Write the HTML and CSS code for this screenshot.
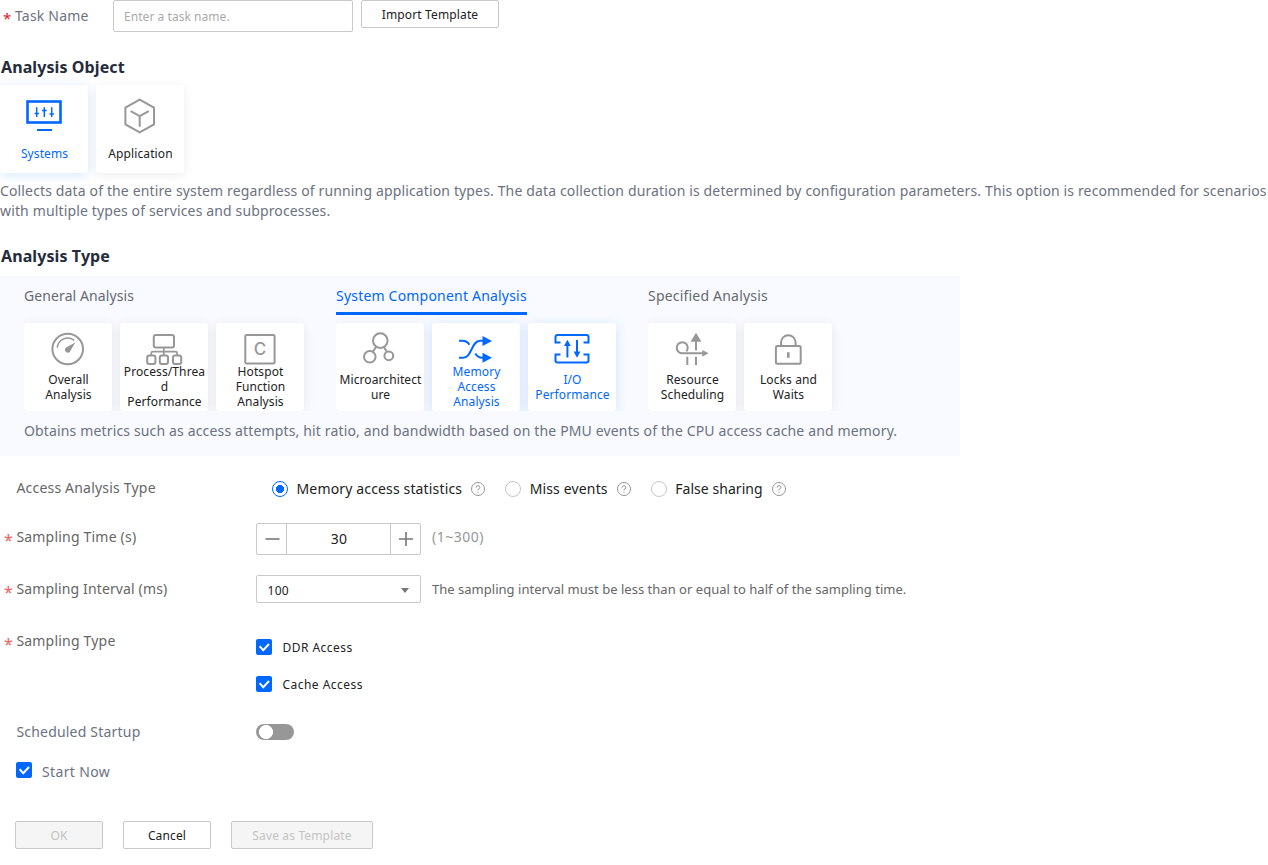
FILE: index.html
```html
<!DOCTYPE html>
<html lang="en">
<head>
<meta charset="utf-8">
<title>Create Analysis Task</title>
<link rel="stylesheet" href="styles.css">
</head>
<body>
<main class="page">
  <div class="name-row">
    <label class="label required name-label"><span>Task Name</span></label>
    <input class="name-input" type="text" placeholder="Enter a task name.">
    <button class="btn import-btn">Import Template</button>
  </div>

  <h3 class="heading object-heading">Analysis Object</h3>
  <div class="cards object-cards">
    <div class="card card-tall active">
      <svg class="icon" viewBox="0 0 40 40"><rect x="3.5" y="5.5" width="33" height="21" stroke-width="2.6"/><path d="M13 34h15"/><path d="M12.7 11.2v9.8M20.3 11.2v9.8M27.7 11.2v9.8M10.5 17.5h4.4M18 14.5h4.6M25.5 18h4.4" stroke-width="1.5"/></svg>
      <span class="card-text">Systems</span>
    </div>
    <div class="card card-tall">
      <svg class="icon" viewBox="0 0 40 40"><path d="M19.7 3.7 34 11.6v16.8l-14.3 8-14.3-8V11.6zM10.7 15.2l9 4.9 9-4.9M19.7 20v10.7"/></svg>
      <span class="card-text">Application</span>
    </div>
  </div>
  <p class="description">Collects data of the entire system regardless of running application types. The data collection duration is determined by configuration parameters. This option is recommended for scenarios with multiple types of services and subprocesses.</p>

  <h3 class="heading type-heading">Analysis Type</h3>
  <section class="panel">
    <div class="groups">
      <div class="group">
        <div class="tab tab-general">General Analysis</div>
        <div class="cards group-cards">
          <div class="card">
            <svg class="icon" viewBox="0 0 40 40"><circle cx="19.7" cy="20" r="15.3"/><path d="M9.3 18.7c.5-8 9.5-12.5 17-7.4" stroke-width="1.5"/><path class="solid" d="M27.3 13.4 22.6 21.6a2.9 2.9 0 1 1-4.2-3.4z"/></svg>
            <span class="card-text">Overall<br>Analysis</span>
          </div>
          <div class="card">
            <svg class="icon" viewBox="0 0 40 40"><rect x="9.8" y="6" width="20.2" height="12.6" rx="2"/><rect x="3.2" y="26.4" width="8.2" height="8.6" rx="2"/><rect x="15.8" y="26.4" width="8.2" height="8.6" rx="2"/><rect x="29" y="26.4" width="8.2" height="8.6" rx="2"/><path d="M19.8 18.6v7.8M7.3 26.4v-2.2q0-1.5 1.5-1.5h22.8q1.5 0 1.5 1.5v2.2" stroke-width="1.7"/></svg>
            <span class="card-text">Process/Threa<br>d<br>Performance</span>
          </div>
          <div class="card">
            <svg class="icon" viewBox="0 0 40 40"><rect x="5.3" y="6" width="29.3" height="28.4" rx="1.5"/><text class="icon-letter" x="20" y="26">C</text></svg>
            <span class="card-text">Hotspot<br>Function<br>Analysis</span>
          </div>
        </div>
      </div>
      <div class="group">
        <div class="tab tab-active">System Component Analysis</div>
        <div class="cards group-cards">
          <div class="card">
            <svg class="icon" viewBox="0 0 40 40"><circle cx="20.3" cy="11.6" r="7.3"/><circle cx="9.8" cy="27.8" r="5.8"/><circle cx="28.8" cy="26.8" r="4.4"/><path d="m16.3 17.8-3.5 5M24 18l2.7 4.8"/></svg>
            <span class="card-text">Microarchitect<br>ure</span>
          </div>
          <div class="card active">
            <svg class="icon" viewBox="0 0 40 40"><path d="M3 28.8h4c9 0 8.2-17 17-17h3M3 11.8h3q5 0 7.5 4M19.3 24.5q2.6 4.2 6.7 4.2h1"/><path class="solid" d="m26.5 6.900 9.500 5-9.500 5zM26.500 23.700l9.500 5-9.500 5z"/></svg>
            <span class="card-text">Memory<br>Access<br>Analysis</span>
          </div>
          <div class="card active">
            <svg class="icon" viewBox="0 0 40 40"><path d="M8.500 13.500H3.500V8q0-2 2-2h29q2 0 2 2v5.500h-5M8.500 25.400H3.500v6.200q0 2 2 2h29q2 0 2-2v-6.200h-5"/><path d="M15.400 28.500V15M25 11v13"/><path class="solid" d="m15.400 10.800 3.400 6.200H12zM25 28.700l3.400-6.200h-6.800z"/></svg>
            <span class="card-text">I/O<br>Performance</span>
          </div>
        </div>
      </div>
      <div class="group">
        <div class="tab">Specified Analysis</div>
        <div class="cards group-cards">
          <div class="card">
            <svg class="icon" viewBox="0 0 40 40"><path d="M14.500 22.300a5.500 5.500 0 1 0-4.800 2H31M24 12v9.500M15.300 27.700V36M24 27.700V36"/><path class="solid" d="m24 3.700 5.400 9H18.600zM30.300 20.900l6.200 3.400-6.200 3.400z"/></svg>
            <span class="card-text">Resource<br>Scheduling</span>
          </div>
          <div class="card">
            <svg class="icon" viewBox="0 0 40 40"><rect x="7.900" y="17" width="24.800" height="17.800" rx="1.500"/><path d="M13 17v-3.500a7.300 7.300 0 0 1 14.600 0V17"/><path d="M20.300 23.200v5.600" stroke-width="2.600"/></svg>
            <span class="card-text">Locks and<br>Waits</span>
          </div>
        </div>
      </div>
    </div>
    <p class="panel-note">Obtains metrics such as access attempts, hit ratio, and bandwidth based on the PMU events of the CPU access cache and memory.</p>
  </section>

  <form class="form">
    <div class="row row-access">
      <span class="label">Access Analysis Type</span>
      <div class="radios">
        <span class="radio checked"></span><span class="radio-text">Memory access statistics</span>
        <svg class="help" viewBox="0 0 14 14"><circle cx="7" cy="7" r="6.500"/><path d="M5.100 5.600q0-2 1.900-2t1.900 1.800q0 1.200-1.900 2v1M7 9.700v1.100"/></svg>
        <span class="radio"></span><span class="radio-text">Miss events</span>
        <svg class="help" viewBox="0 0 14 14"><circle cx="7" cy="7" r="6.500"/><path d="M5.100 5.600q0-2 1.900-2t1.900 1.800q0 1.200-1.900 2v1M7 9.700v1.100"/></svg>
        <span class="radio"></span><span class="radio-text last">False sharing</span>
        <svg class="help" viewBox="0 0 14 14"><circle cx="7" cy="7" r="6.500"/><path d="M5.100 5.600q0-2 1.900-2t1.900 1.800q0 1.200-1.900 2v1M7 9.700v1.100"/></svg>
      </div>
    </div>
    <div class="row row-time">
      <span class="label required">Sampling Time (s)</span>
      <div class="stepper">
        <svg class="step" viewBox="0 0 29 30"><path d="M8.500 15h14"/></svg>
        <span class="step-value">30</span>
        <svg class="step" viewBox="0 0 29 30"><path d="M8 15h14M15 8v14"/></svg>
      </div>
      <span class="range">(1~300)</span>
    </div>
    <div class="row row-interval">
      <span class="label required">Sampling Interval (ms)</span>
      <div class="select"><span>100</span><i class="caret"></i></div>
      <span class="hint">The sampling interval must be less than or equal to half of the sampling time.</span>
    </div>
    <div class="row row-type">
      <span class="label required">Sampling Type</span>
      <div class="checks">
        <div class="check-line"><svg class="check" viewBox="0 0 16 16"><path d="m3.600 7.200 3.600 4 5.800-6.200"/></svg><span class="check-text">DDR Access</span></div>
        <div class="check-line"><svg class="check" viewBox="0 0 16 16"><path d="m3.600 7.200 3.600 4 5.800-6.200"/></svg><span class="check-text">Cache Access</span></div>
      </div>
    </div>
    <div class="row row-schedule">
      <span class="label">Scheduled Startup</span>
      <span class="toggle"></span>
    </div>
    <div class="start-line"><svg class="check" viewBox="0 0 16 16"><path d="m3.600 7.200 3.600 4 5.800-6.200"/></svg><span class="start-text">Start Now</span></div>
    <div class="actions">
      <button class="btn btn-ok disabled" type="button">OK</button>
      <button class="btn btn-cancel" type="button">Cancel</button>
      <button class="btn btn-save disabled" type="button">Save as Template</button>
    </div>
  </form>
</main>
</body>
</html>
```
FILE: styles.css
```css
* { box-sizing: border-box; }
body { margin: 0; background: #fff; color: #6c7280; font: 14px/20px "Noto Sans", "Open Sans", sans-serif; letter-spacing: .14px; }
.page { width: 1268px; height: 865px; overflow: hidden; }
.name-row { display: flex; height: 32px; align-items: flex-start; }
.label { white-space: nowrap; letter-spacing: .2px; }
.required::before { content: "*"; display: inline-block; width: 12.4px; height: 20px; color: #f45c5e; font-size: 16px; line-height: 20px; vertical-align: -4px; }
.name-label { width: 113px; padding: 6px 0 0 3px; }
.name-label::before { width: 12px; color: #e02128; font-size: 15px; vertical-align: -3px; }
.name-input { width: 240px; height: 32px; margin: 0 8px 0 0; padding: 0 10px; border: 1px solid #c8c8c8; border-radius: 2px; background: #fff; font: 12px "Noto Sans", sans-serif; letter-spacing: .05px; }
.name-input::placeholder { color: #aaa; opacity: 1; }
.btn { height: 28px; padding: 1px 0 0; border: 1px solid #c8c8c8; border-radius: 2px; background: #fff; color: #222; font: 12px/25px "Noto Sans", sans-serif; letter-spacing: .14px; white-space: nowrap; }
.disabled { background: #f5f5f5; color: #c4c4c4; }
.import-btn { width: 138px; }
.heading { margin: 0; height: 24px; color: #252b3a; font-size: 16px; line-height: 24px; font-weight: 700; letter-spacing: .1px; }
.object-heading { margin: 23px 0 6px 1px; }
.cards { display: flex; gap: 8px; }
.card { display: flex; flex-direction: column; align-items: center; width: 88px; height: 88px; padding-top: 6px; border-radius: 3px; background: #fff; color: #222; box-shadow: 0 2px 12px rgba(0, 0, 0, .08); font-size: 12px; line-height: 15px; text-align: center; white-space: nowrap; letter-spacing: .1px; }
.card.active { color: #0067ff; box-shadow: 0 2px 12px rgba(0, 103, 255, .16); }
.icon { display: block; flex: none; width: 40px; height: 40px; fill: none; stroke: #979797; stroke-width: 2; }
.active .icon { stroke: #0067ff; }
.icon .solid { fill: #979797; stroke: none; }
.active .icon .solid { fill: #0067ff; }
.icon-letter { fill: #979797; stroke: none; font: 500 17px Inter, sans-serif; text-anchor: middle; }
.card-text { display: flex; flex-direction: column; justify-content: center; height: 45px; margin-top: -5px; padding-left: 1px; }
.card-tall { padding-top: 11px; }
.card-tall .card-text { margin-top: -3px; }
.description { margin: 8px 0 0; height: 40px; }
.type-heading { margin: 23px 0 8px 1px; }
.panel { width: 960px; height: 180px; padding-left: 24px; background: #f8faff; }
.groups { display: flex; }
.group { width: 312px; }
.tab { display: inline-block; height: 39px; padding-top: 10px; white-space: nowrap; letter-spacing: .2px; color: #666a70; }
.tab-general { letter-spacing: .1px; }
.tab-active { color: #0067ff; border-bottom: 3px solid #0067ff; }
.group-cards { height: 96px; padding-top: 8px; overflow: hidden; }
.panel-note { margin: 10px 0 0; white-space: nowrap; letter-spacing: .15px; }
.form { margin: 0; }
.row { display: flex; align-items: flex-start; }
.row > .label { width: 256px; padding-left: 16.4px; color: #666; }
.row > .required { padding-left: 4px; }
.row-access { height: 67px; padding-top: 22px; }
.radios { display: flex; align-items: center; height: 22px; padding-left: 16px; color: #222; white-space: nowrap; }
.radio { width: 16px; height: 16px; border: 1px solid #c8c8c8; border-radius: 50%; background: #fff; margin-right: 8.500px; }
.radio.checked { border-color: #0067ff; background: radial-gradient(circle, #0067ff 3.800px, #fff 4.300px); }
.radio-text { letter-spacing: .15px; }
.radio-text.last { letter-spacing: .05px; }
.help { width: 14px; height: 14px; margin-left: 9px; margin-right: 20px; fill: none; stroke: #979797; }
.row-time { height: 52px; }
.row-time > .label, .row-time > .range { margin-top: 4px; }
.stepper { display: flex; width: 165px; height: 32px; border: 1px solid #c8c8c8; border-radius: 2px; color: #222; }
.step { width: 29px; height: 30px; fill: none; stroke: #777; stroke-width: 1.600; }
.step-value { flex: 1; padding-left: 1px; border: solid #c8c8c8; border-width: 0 1px; text-align: center; line-height: 30px; }
.range { margin-left: 11px; color: #979797; letter-spacing: .5px; }
.row-interval { height: 52px; }
.row-interval > .label { margin-top: 4px; letter-spacing: .14px; }
.select { display: flex; align-items: center; justify-content: space-between; width: 165px; height: 28px; padding: 3px 11px 0 10.500px; border: 1px solid #c8c8c8; border-radius: 2px; color: #222; font-size: 12px; letter-spacing: .3px; }
.caret { border: solid transparent; border-width: 5px 4.500px 0; border-top-color: #777; }
.hint { margin: 4px 0 0 11px; font-size: 13px; letter-spacing: .02px; white-space: nowrap; color: #666; }
.row-type { height: 95px; }
.row-type > .label { margin-top: 4px; }
.checks { display: grid; gap: 21px; padding-top: 12px; color: #222; }
.check-line { display: flex; align-items: center; height: 16px; font-size: 12px; }
.check { display: block; width: 16px; height: 16px; border-radius: 2px; background: #0067ff; fill: none; stroke: #fff; stroke-width: 2; }
.check-text { margin: 2px 0 0 10.500px; letter-spacing: .47px; }
.row-schedule { height: 40px; }
.row-schedule > .label { color: #6c7280; }
.toggle { width: 38px; height: 16px; margin-top: 2px; border-radius: 8px; background: radial-gradient(circle at 10px 8px, #fff 6.700px, #979797 7.300px); }
.start-line { display: flex; align-items: flex-start; padding-left: 16px; height: 59px; }
.start-text { margin-left: 10px; letter-spacing: .35px; }
.actions { display: flex; gap: 20px; padding-left: 15px; }
.btn-ok, .btn-cancel { width: 88px; }
.btn-save { width: 142px; }
```
